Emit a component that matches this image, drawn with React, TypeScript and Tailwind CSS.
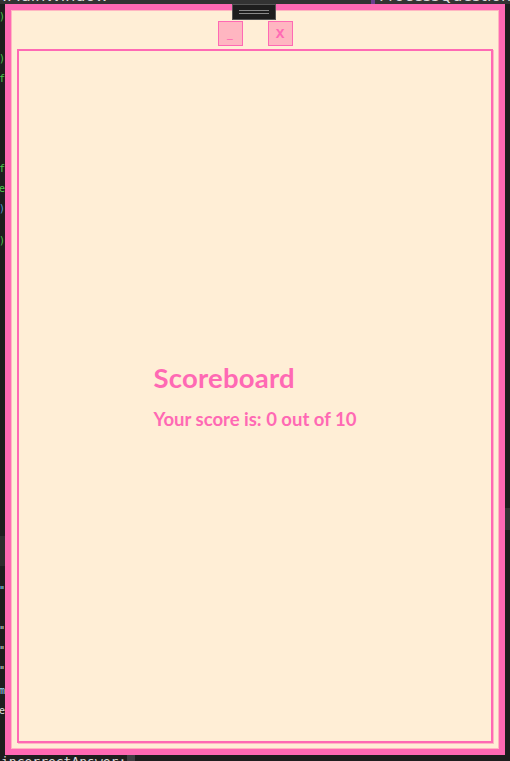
import React from 'react';

// Scoreboard window sitting on top of a dark code editor

const PINK = 'text-[#ff69b4]';

const WindowButton = ({ label, bold }: { label: string; bold?: boolean }) => (
  <button
    className={`w-[25px] h-[25px] bg-[#ffb6c1] border border-[#ff69b4] flex items-center justify-center ${PINK} text-[13px] leading-none ${bold ? 'font-bold' : ''}`}
    style={{ fontFamily: '"Noto Sans", sans-serif' }}
  >
    {label}
  </button>
);

const App: React.FC = () => {
  return (
    <div className="relative w-[510px] h-[761px] bg-[#1e1e1e] overflow-hidden flex flex-col">
      {/* editor tab strip peeking out at the top */}
      <div className="h-[4px] bg-[#333333] overflow-hidden flex items-end text-[#dcdcdc] text-[16px] leading-[16px]" style={{ fontFamily: '"DejaVu Sans", sans-serif' }}>
        <span className="pl-[2px] w-[330px] shrink-0">.MainWindow</span>
        <span className="ml-[41px] w-[4px] h-[4px] bg-[#6a3f8e] shrink-0" />
        <span className="ml-[4px] shrink-0">ProcessQuestion(my</span>
      </div>

      <div className="flex flex-1">
        {/* left gutter with bits of code */}
        <div className="w-[5px] flex flex-col items-end pt-[8px] gap-[10px] text-[10px] leading-[10px]" style={{ fontFamily: '"DejaVu Sans Mono", monospace' }}>
          <span className="text-[#4ec94e]">)</span>
          <span className="text-[#4ec94e] mt-[22px]">)</span>
          <span className="text-[#4ec94e]">f</span>
          <span className="text-[#4ec94e] mt-[70px]">f</span>
          <span className="text-[#4ec94e]">e</span>
          <span className="text-[#569cd6]">)</span>
          <span className="text-[#4ec94e] mt-[12px]">)</span>
          <span className="h-[30px] mt-[280px] w-[5px] bg-[#2d2d2d]" />
          <span className="text-[#9cdcfe] mt-[10px]">"</span>
          <span className="text-[#dcdcdc] mt-[20px]">"</span>
          <span className="text-[#dcdcdc]">"</span>
          <span className="text-[#dcdcdc]">"</span>
          <span className="text-[#9cdcfe]">m</span>
          <span className="text-[#dcdcdc]">e</span>
        </div>

        {/* the app window */}
        <div className="w-[500px] h-[751px] border-[6px] border-[#ff69b4]">
          <div className="h-full border border-[#ffb6c1] bg-[#ffeed6] flex flex-col pt-[10px] px-[5px] pb-[5px]">
            <div className="flex justify-center gap-[25px]">
              <WindowButton label="_" />
              <WindowButton label="X" bold />
            </div>
            <div className="mt-[3px] flex-1 border-2 border-[#ff69b4] shadow-[1px_1px_0_#ffb6c1] flex items-center justify-center">
              <div className={`flex flex-col items-start ${PINK}`} style={{ fontFamily: 'Lato, sans-serif' }}>
                <h1 className="text-[27.5px] font-bold leading-[32px] tracking-[0.2px]">Scoreboard</h1>
                <p className="mt-[14px] text-[18.5px] font-bold leading-[22px]">Your score is: 0 out of 10</p>
              </div>
            </div>
          </div>
        </div>

        {/* right gutter */}
        <div className="w-[5px] flex flex-col">
          <div className="h-[504px]" />
          <div className="h-[22px] bg-[#333333]" />
        </div>
      </div>

      {/* editor line peeking out at the bottom */}
      <div className="h-[6px] overflow-hidden flex items-start text-[#dcdcdc] text-[13px] leading-[16px]" style={{ fontFamily: '"DejaVu Sans Mono", monospace' }}>
        <span className="pl-[1px] -mt-[1px]">incorrectAnswer:</span>
        <span className="ml-[1px] w-[8px] h-[6px] bg-[#3e3e42]" />
      </div>

      {/* drag handle overlapping the window's top edge */}
      <div className="absolute top-[4px] left-[232px] w-[44px] h-[16px] bg-[#1e1e1e] border border-[#555555] flex flex-col items-center justify-center gap-[2px]">
        <div className="w-[30px] h-px bg-[#8a8a8a]" />
        <div className="w-[30px] h-px bg-[#8a8a8a]" />
      </div>
    </div>
  );
};

export default App;
